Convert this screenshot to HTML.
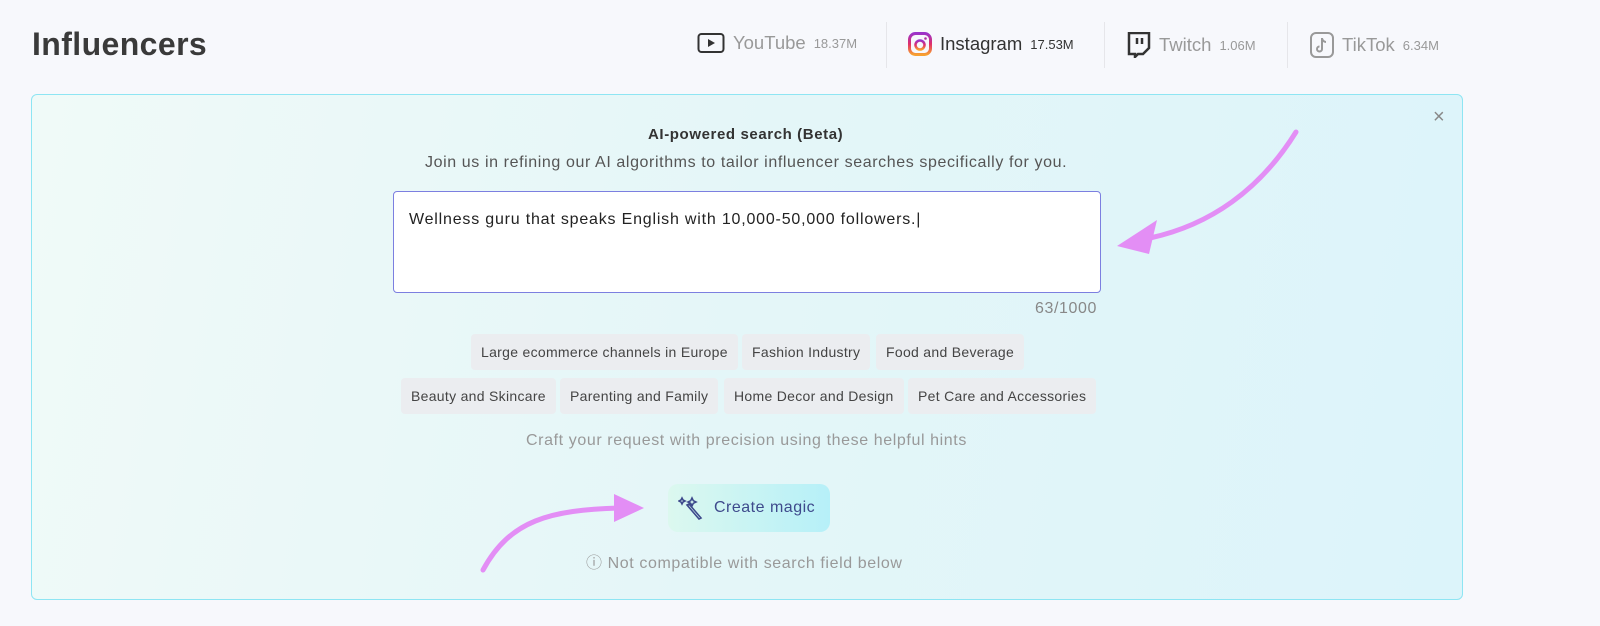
<!DOCTYPE html><html><head><style>
body{margin:0;width:1600px;height:626px;background:#f7f8fc;font-family:"Liberation Sans",sans-serif;position:relative;overflow:hidden;color:#333}
.a{position:absolute;white-space:nowrap}
h1{position:absolute;left:32px;top:26px;margin:0;font-size:32px;letter-spacing:0.4px;font-weight:bold;color:#3a3a3a}
.tab{position:absolute;top:32px;font-size:18.5px;color:#999;display:flex;align-items:center;gap:8px}
.tab small{font-size:13px}
.sep{position:absolute;top:22px;width:1px;height:46px;background:#e6e6ea}
.card{position:absolute;left:31px;top:94px;width:1430px;height:504px;border:1px solid #8ee5f3;border-radius:6px;background:linear-gradient(100deg,#f0faf8 0%,#e4f6f8 50%,#dcf4fa 100%)}
.ta{position:absolute;left:393px;top:191px;width:706px;height:100px;border:1px solid #7c7fe0;border-radius:4px;background:#fff}
.chip{position:absolute;height:36px;line-height:36px;padding:0 10px;background:#ebedf0;border-radius:4px;font-size:14px;letter-spacing:0.3px;color:#444;white-space:nowrap}
.btn{position:absolute;left:668px;top:484px;width:162px;height:48px;border-radius:10px;background:linear-gradient(90deg,#dcf8ef,#b6f0f8);color:#3e4a8c;font-size:16px;letter-spacing:0.5px}
.ls{font-size:16px;letter-spacing:0.6px}
</style></head><body>
<h1>Influencers</h1>
<div class="tab" style="left:697px"><svg width="28" height="22"><rect x="1.5" y="2" width="25" height="18" rx="3" fill="none" stroke="#333" stroke-width="2"/><path d="M11 7l7 4-7 4z" fill="#333"/></svg>YouTube <small>18.37M</small></div>
<div class="sep" style="left:886px"></div>
<div class="tab" style="left:908px;color:#333"><svg width="24" height="24"><defs><linearGradient id="g" x1="0" y1="0" x2="0" y2="1"><stop offset="0" stop-color="#9b33c9"/><stop offset=".5" stop-color="#e0306a"/><stop offset="1" stop-color="#f7a030"/></linearGradient></defs><rect x="1.5" y="1.5" width="21" height="21" rx="6" fill="none" stroke="url(#g)" stroke-width="3"/><circle cx="12" cy="13" r="4.5" fill="none" stroke="url(#g)" stroke-width="2.5"/><circle cx="17.5" cy="6.5" r="1.3" fill="#b033a0"/></svg>Instagram <small>17.53M</small></div>
<div class="sep" style="left:1104px"></div>
<div class="tab" style="left:1127px"><svg width="24" height="26"><path d="M2 1h20v15l-6 6h-5l-3 3v-3H2z" fill="none" stroke="#333" stroke-width="2.5"/><path d="M10 6v6M15 6v6" stroke="#333" stroke-width="2.5"/></svg>Twitch <small>1.06M</small></div>
<div class="sep" style="left:1287px"></div>
<div class="tab" style="left:1310px"><svg width="24" height="26"><rect x="1" y="1" width="22" height="24" rx="5" fill="none" stroke="#999" stroke-width="2"/><path d="M12 6v11a2.5 2.5 0 1 1-2.5-2.5M12 6c0 2 2 4 4 4" fill="none" stroke="#999" stroke-width="2"/></svg>TikTok <small>6.34M</small></div>
<div class="card"></div>
<div class="a" style="left:1433px;top:106px;color:#888;font-size:20px">×</div>
<div class="a ls" style="left:648px;top:126px;font-weight:bold;font-size:15px;color:#333">AI-powered search (Beta)</div>
<div class="a ls" style="left:425px;top:154px;color:#555">Join us in refining our AI algorithms to tailor influencer searches specifically for you.</div>
<div class="ta"><div class="a" style="left:15px;top:19px;font-size:16px;letter-spacing:0.8px;color:#222">Wellness guru that speaks English with 10,000-50,000 followers.|</div></div>
<div class="a ls" style="left:1035px;top:300px;color:#888">63/1000</div>
<div class="chip" style="left:471px;top:334px">Large ecommerce channels in Europe</div>
<div class="chip" style="left:742px;top:334px">Fashion Industry</div>
<div class="chip" style="left:876px;top:334px">Food and Beverage</div>
<div class="chip" style="left:401px;top:378px">Beauty and Skincare</div>
<div class="chip" style="left:560px;top:378px">Parenting and Family</div>
<div class="chip" style="left:724px;top:378px">Home Decor and Design</div>
<div class="chip" style="left:908px;top:378px">Pet Care and Accessories</div>
<div class="a ls" style="left:526px;top:432px;color:#999">Craft your request with precision using these helpful hints</div>
<div class="btn"><svg class="a" style="left:10px;top:11px" width="26" height="26" fill="none" stroke="#3e4a8c" stroke-width="1.6"><path d="M4 3l1 2 2 1-2 1-1 2-1-2-2-1 2-1zM14 3l1.3 2.7L18 7l-2.7 1.3L14 11l-1.3-2.7L10 7l2.7-1.3zM9 10l2-1 12 14-2 1z"/></svg><span class="a" style="left:46px;top:15px">Create magic</span></div>
<div class="a ls" style="left:586px;top:549px;color:#999">ⓘ Not compatible with search field below</div>
<svg class="a" style="left:0;top:0" width="1600" height="626" fill="none" stroke="#e38ef5" stroke-width="5" stroke-linecap="round"><path d="M1296 132C1260 190 1210 225 1150 238"/><path d="M483 570C510 520 550 510 620 508"/><path d="M1117 246l40-26-8 34z" fill="#e38ef5" stroke="none"/><path d="M614 494l30 14-30 14z" fill="#e38ef5" stroke="none"/></svg>
</body></html>
